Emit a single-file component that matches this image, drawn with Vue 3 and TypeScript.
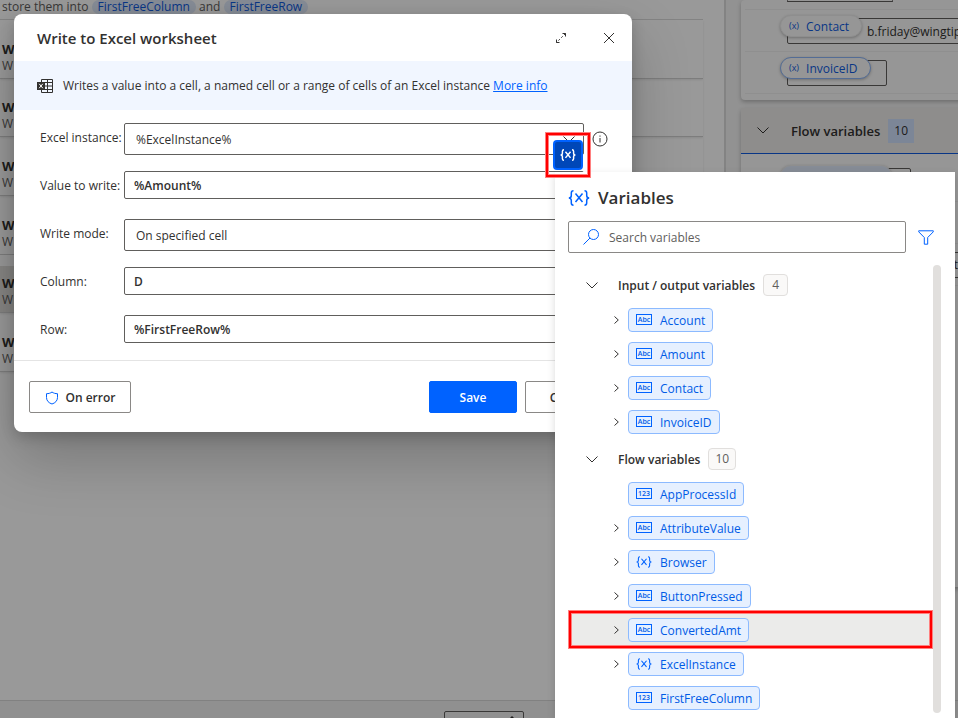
<script setup lang="ts">
import { ref } from 'vue'

type Kind = 'text' | 'number' | 'object'

interface Variable {
  name: string
  kind: Kind
  expandable: boolean
}

interface Group {
  title: string
  count: number
  items: Variable[]
}

const instance = ref('%ExcelInstance%')
const amount = ref('%Amount%')
const mode = ref('On specified cell')
const column = ref('D')
const row = ref('%FirstFreeRow%')
const search = ref('')
const selected = ref('ConvertedAmt')
const actionCount = 6
const currentAction = 5

const bracePath =
  'M5.5.8C3.5.8 3.3 2 3.3 3v2.500C3.300 7 2.500 8 .8 8c1.700 0 2.500 1 2.500 2.500V13c0 1 .2 2.200 2.200 2.200M16.500.8c2 0 2.200 1.200 2.200 2.200v2.500c0 1.500.8 2.500 2.500 2.500-1.700 0-2.500 1-2.500 2.500V13c0 1-.2 2.200-2.200 2.200M7.500 3.500l7 8.500M14.500 3.500l-7 8.500'

const groups: Group[] = [
  {
    title: 'Input / output variables',
    count: 4,
    items: [
      { name: 'Account', kind: 'text', expandable: true },
      { name: 'Amount', kind: 'text', expandable: true },
      { name: 'Contact', kind: 'text', expandable: true },
      { name: 'InvoiceID', kind: 'text', expandable: true },
    ],
  },
  {
    title: 'Flow variables',
    count: 10,
    items: [
      { name: 'AppProcessId', kind: 'number', expandable: false },
      { name: 'AttributeValue', kind: 'text', expandable: true },
      { name: 'Browser', kind: 'object', expandable: true },
      { name: 'ButtonPressed', kind: 'text', expandable: true },
      { name: 'ConvertedAmt', kind: 'text', expandable: true },
      { name: 'ExcelInstance', kind: 'object', expandable: true },
      { name: 'FirstFreeColumn', kind: 'number', expandable: false },
    ],
  },
]
</script>

<template>
  <div class="app">
    <div class="workspace">
      <main class="flow">
        <p class="flow-note">
          store them into <span class="token">FirstFreeColumn</span> and
          <span class="token">FirstFreeRow</span>
        </p>
        <ol class="actions">
          <li v-for="n in actionCount" :key="n" class="action" :class="{ current: n === currentAction }">
            <strong>W</strong>
            <span>W</span>
          </li>
        </ol>
      </main>

      <aside class="side">
        <section class="side-card io">
          <div class="io-row first"><span class="value-box"></span></div>
          <div class="io-row">
            <span class="pill"><i>(x)</i>Contact</span>
            <span class="value-box wide">b.friday@wingtip</span>
          </div>
          <div class="io-row">
            <span class="pill outlined"><i>(x)</i>InvoiceID</span>
            <span class="value-box"></span>
          </div>
        </section>
        <section class="side-card flow-vars">
          <header class="side-head">
            <svg width="12" height="7" viewBox="0 0 12 7"><path d="M.5.5 6 6 11.5.5" /></svg>
            <h2>Flow variables</h2>
            <span class="side-count">10</span>
          </header>
          <div class="io-row">
            <span class="pill tinted"></span>
            <span class="value-box mid"></span>
          </div>
          <div class="io-row"></div>
          <div class="io-row">
            <span class="value-box tail">t</span>
          </div>
        </section>
      </aside>
    </div>
    <footer class="status"><span class="spinner"><i></i></span></footer>
  </div>

  <div class="scrim"></div>

  <section class="dialog" role="dialog" aria-labelledby="dialog-title">
    <header class="dialog-head">
      <h1 id="dialog-title">Write to Excel worksheet</h1>
      <button type="button" class="plain expand" aria-label="Expand">
        <svg width="12" height="12" viewBox="0 0 12 12">
          <path d="M7.500 1.500h3v3M4.500 10.500h-3v-3" />
          <path d="M10.500 1.500 1.500 10.500" stroke-dasharray="2 2" />
        </svg>
      </button>
      <button type="button" class="plain" aria-label="Close">
        <svg width="12" height="12" viewBox="0 0 12 12"><path d="M1 1l10 10M11 1 1 11" /></svg>
      </button>
    </header>

    <div class="summary">
      <svg width="16" height="16" viewBox="0 0 16 16">
        <path d="M4.500 1.500h11v13h-11zM4.500 4.500h11M4.500 8h11M4.500 11.500h11M10.500 1.500v13" class="grid-lines" />
        <path d="M0 4h8v8H0z" class="tile" />
        <path d="M2.200 5.800l3.600 4.400M5.800 5.800l-3.600 4.400" class="tile-x" />
      </svg>
      <p>
        Writes a value into a cell, a named cell or a range of cells of an Excel instance
        <a href="#">More info</a>
      </p>
    </div>

    <form class="form" @submit.prevent>
      <label for="f-instance">Excel instance:</label>
      <div class="field">
        <select id="f-instance" v-model="instance">
          <option>%ExcelInstance%</option>
        </select>
        <svg class="caret" width="12" height="7" viewBox="0 0 12 7"><path d="M.5.5 6 6 11.500.5" /></svg>
      </div>
      <button type="button" class="plain info" aria-label="Information">
        <svg width="16" height="16" viewBox="0 0 16 16">
          <circle cx="8" cy="8" r="7" />
          <path d="M8 7v4.500M8 4.500v1.200" />
        </svg>
      </button>

      <label for="f-amount">Value to write:</label>
      <div class="field">
        <input id="f-amount" v-model="amount" type="text" />
        <span class="picker">
          <button type="button" aria-label="Select variable">
            <svg width="16" height="12" viewBox="0 0 22 16"><path :d="bracePath" /></svg>
          </button>
        </span>
      </div>

      <label for="f-mode">Write mode:</label>
      <div class="field">
        <select id="f-mode" v-model="mode">
          <option>On specified cell</option>
        </select>
      </div>

      <label for="f-column">Column:</label>
      <div class="field"><input id="f-column" v-model="column" type="text" /></div>

      <label for="f-row">Row:</label>
      <div class="field"><input id="f-row" v-model="row" type="text" /></div>
    </form>

    <footer class="dialog-foot">
      <button type="button" class="btn on-error">
        <svg width="14" height="14" viewBox="0 0 14 14">
          <path d="M7 1C5.500 2.200 3.500 2.700 1.500 2.700V6.500C1.500 9.800 3.800 12 7 13c3.200-1 5.500-3.200 5.500-6.500V2.700C10.500 2.700 8.500 2.200 7 1z" />
        </svg>
        On error
      </button>
      <button type="button" class="btn primary">Save</button>
      <button type="button" class="btn">Cancel</button>
    </footer>
  </section>

  <section class="variables" aria-labelledby="variables-title">
    <header class="variables-head">
      <svg class="brace" width="22" height="16" viewBox="0 0 22 16"><path :d="bracePath" /></svg>
      <h2 id="variables-title">Variables</h2>
    </header>

    <div class="search-row">
      <label class="search">
        <svg width="16" height="16" viewBox="0 0 16 16">
          <circle cx="10.500" cy="5.500" r="5" /><path d="M7 9 .5 15.500" />
        </svg>
        <input v-model="search" type="text" placeholder="Search variables" aria-label="Search variables" />
      </label>
      <button type="button" class="plain filter" aria-label="Filter">
        <svg width="16" height="15" viewBox="0 0 16 15">
          <path d="M.7.8h14.600v1L9.700 7.500v6.700H6.300V7.500L.7 1.800z" />
        </svg>
      </button>
    </div>

    <div class="scroller">
      <div class="groups">
        <section v-for="group in groups" :key="group.title">
          <header class="group-head">
            <svg width="12" height="7" viewBox="0 0 12 7"><path d="M.5.5 6 6 11.500.5" /></svg>
            <h3>{{ group.title }}</h3>
            <span class="count">{{ group.count }}</span>
          </header>
          <ul>
            <li
              v-for="item in group.items"
              :key="item.name"
              class="item"
              :class="{ active: item.name === selected }"
            >
              <span class="expander">
                <svg v-if="item.expandable" width="5" height="8" viewBox="0 0 5 8"><path d="M.5.5 4.300 4 .5 7.500" /></svg>
              </span>
              <button type="button" class="chip" @click="selected = item.name">
                <svg v-if="item.kind === 'object'" class="brace" width="16" height="12" viewBox="0 0 22 16">
                  <path :d="bracePath" />
                </svg>
                <span v-else class="kind">{{ item.kind === 'text' ? 'Abc' : '123' }}</span>
                <span class="chip-name">{{ item.name }}</span>
              </button>
            </li>
          </ul>
        </section>
      </div>
      <div class="rail"></div>
    </div>
  </section>
</template>

<style>
html,
body {
  height: 100%;
  overflow: hidden;
}

#app {
  height: 100%;
  position: relative;
  font: 12px/16px "Open Sans", "Noto Sans", sans-serif;
  color: #323130;
}
</style>

<style scoped>
* {
  box-sizing: border-box;
}

h1,
h2,
h3,
p,
ul,
ol {
  margin: 0;
  padding: 0;
  list-style: none;
}

button,
input,
select {
  font: inherit;
  color: inherit;
}

svg {
  display: block;
  flex: none;
  fill: none;
  stroke: currentColor;
}

.plain {
  display: flex;
  padding: 0;
  border: 0;
  background: none;
}

/* Designer behind the dialog */
.app {
  display: flex;
  flex-direction: column;
  height: 100%;
  background: #fff;
}

.workspace {
  display: flex;
  flex: 1;
  min-height: 0;
}

.flow {
  flex: 1;
  min-width: 0;
  padding-right: 21px;
}

.flow-note {
  height: 20px;
  padding-left: 2px;
  line-height: 14px;
  color: #605e5c;
  border-bottom: 1px solid #dcdcdc;
  white-space: nowrap;
}

.token {
  display: inline-block;
  padding: 0 6px;
  border-radius: 8px;
  background: #dfe9fa;
  color: #0f5be0;
}

.actions {
  display: grid;
  grid-auto-rows: 1fr;
  min-height: 352px;
}

.action {
  display: flex;
  flex-direction: column;
  justify-content: flex-end;
  gap: 1px;
  padding: 0 2px 4px;
  color: #605e5c;
  border-bottom: 1px solid #d2d2d2;
  box-shadow: 0 1px 2px rgba(0, 0, 0, 0.1);
}

.action strong {
  font-size: 13px;
  font-weight: 700;
  color: #323130;
}

.action.current {
  background: linear-gradient(#fff 11px, #e1dfdd 11px);
}

.side {
  width: 234px;
  padding-left: 15px;
  background: #f3f3f3;
  border-left: 2px solid #dadada;
  overflow: hidden;
}

.side-card {
  width: 300px;
  background: #fafafa;
  border-radius: 4px;
  box-shadow: 0 2px 4px rgba(0, 0, 0, 0.25);
}

.io {
  padding-bottom: 6px;
}

.io-row {
  position: relative;
  display: flex;
  height: 42px;
  margin-left: 4px;
  padding: 8px 0 8px 42px;
  border-bottom: 1px solid #efefef;
}

.io-row.first {
  height: 10px;
  padding-top: 0;
}

.io-row.first .value-box {
  height: 2px;
  width: 106px;
  border-top: 0;
}

.value-box {
  border: 1px solid #605e5c;
  border-radius: 2px;
  width: 100px;
  height: 26px;
}

.value-box.wide {
  width: 220px;
  padding-left: 79px;
  line-height: 26px;
}

.value-box.mid {
  width: 124px;
}

.value-box.tail {
  width: 220px;
  padding-right: 48px;
  line-height: 24px;
  text-align: right;
}

.pill {
  position: absolute;
  left: 35px;
  top: 5px;
  display: flex;
  gap: 7px;
  height: 22px;
  padding: 0 12px 0 8px;
  line-height: 21px;
  border: 1px solid #ededed;
  border-radius: 11px;
  background: #fafafa;
  color: #0f5be0;
  box-shadow: 0 1px 3px rgba(0, 0, 0, 0.25);
}

.pill i {
  font-size: 9px;
  font-style: normal;
  line-height: 19px;
}

.pill.outlined {
  border-color: #8ab4f8;
}

.pill.tinted {
  width: 112px;
  background: #dfe9fa;
}

.flow-vars {
  margin-top: 8px;
  min-height: 479px;
}

.side-head {
  display: flex;
  align-items: center;
  height: 46px;
  margin-bottom: 6px;
  padding-left: 16px;
  background: #edebe9;
  border-bottom: 1px solid #0f5be0;
}

.side-head h2 {
  margin-left: 22px;
  font-size: 13px;
  font-weight: 600;
}

.side-count {
  margin-left: 8px;
  padding: 0 6px;
  line-height: 24px;
  background: #cfe0fc;
}

.status {
  display: flex;
  justify-content: center;
  height: 18px;
  padding: 10px 0 0 10px;
  overflow: hidden;
  background: #f0f0f0;
  border-top: 1px solid #d8d8d8;
}

.spinner {
  display: flex;
  justify-content: flex-end;
  width: 80px;
  height: 28px;
  padding: 4px 8px;
  border: 1px solid #605e5c;
  border-radius: 2px;
}

.spinner i {
  height: 0;
  border: 3px solid transparent;
  border-top: 0;
  border-bottom: 3px solid #323130;
}

.scrim {
  position: absolute;
  inset: 0;
  background: rgba(0, 0, 0, 0.4);
}

/* Dialog */
.dialog {
  position: absolute;
  top: 14px;
  left: 14px;
  width: 618px;
  background: #fff;
  border-radius: 8px;
  box-shadow: 0 26px 58px rgba(0, 0, 0, 0.22), 0 5px 14px rgba(0, 0, 0, 0.18);
}

.dialog-head {
  display: flex;
  align-items: center;
  gap: 36px;
  height: 47px;
  padding: 0 17px 0 23px;
}

.dialog-head h1 {
  flex: 1;
  font-size: 15px;
  font-weight: 600;
  line-height: 24px;
}

.summary {
  display: flex;
  align-items: center;
  gap: 10px;
  height: 49px;
  padding: 0 23px;
  background: #f1f6ff;
}

.grid-lines {
  stroke: #323130;
}

.tile {
  fill: #323130;
  stroke: none;
}

.tile-x {
  stroke: #fff;
}

.summary a {
  color: #0062ff;
}

.form {
  display: grid;
  grid-template-columns: 84px 1fr 32px;
  grid-auto-rows: 32px;
  row-gap: 16px;
  padding: 13px 16px 13px 26px;
}

.form label {
  grid-column: 1;
  line-height: 30px;
  white-space: nowrap;
}

.field {
  position: relative;
  grid-column: 2;
}

.field select,
.field input {
  display: block;
  width: 100%;
  height: 32px;
  padding: 2px 11px 0;
  appearance: none;
  border: 1px solid #605e5c;
  border-radius: 2px;
  background: #fff;
  outline: 0;
}

.field input {
  height: 28px;
  padding: 0 9px;
  font-weight: 600;
}

.caret {
  position: absolute;
  right: 9px;
  top: 13px;
}

.info {
  align-self: start;
  padding: 8px;
}

.picker {
  position: absolute;
  z-index: 3;
  right: -6px;
  bottom: calc(100% - 6px);
  padding: 5px;
  border: 2px solid #f00;
  box-shadow: 0 0 0 1px #ff8080, inset 0 0 0 1px #ff8080;
}

.picker button {
  display: grid;
  place-items: center;
  width: 30px;
  height: 30px;
  padding: 0;
  border: 2px solid #0062ff;
  border-radius: 4px;
  background: #0047b8;
  color: #fff;
  stroke-width: 2;
}

.dialog-foot {
  display: flex;
  gap: 8px;
  padding: 20px 19px 19px 15px;
  border-top: 1px solid #e4e4e4;
}

.btn {
  display: flex;
  align-items: center;
  justify-content: center;
  width: 88px;
  height: 32px;
  padding: 2px 0 0;
  border: 1px solid #8a8886;
  border-radius: 2px;
  background: #fff;
  font-weight: 600;
}

.btn.on-error {
  gap: 7px;
  width: 102px;
  margin-right: auto;
}

.btn.on-error svg {
  color: #0062ff;
}

.btn.primary {
  border-color: #0062ff;
  background: #0062ff;
  color: #fff;
}

/* Variable picker */
.variables {
  position: absolute;
  z-index: 2;
  top: 172px;
  right: 3px;
  bottom: 0;
  display: flex;
  flex-direction: column;
  width: 400px;
  padding: 0 14px 5px 13px;
  background: #fff;
  box-shadow: 0 3px 8px rgba(0, 0, 0, 0.15);
}

.variables-head {
  display: flex;
  align-items: center;
  gap: 8px;
  height: 49px;
  padding-top: 2px;
}

.variables-head h2 {
  font-size: 17px;
  font-weight: 600;
  line-height: 24px;
}

.brace {
  color: #0062ff;
  stroke-width: 1.5;
}

.search-row {
  display: flex;
  gap: 12px;
  padding-right: 7px;
}

.search {
  display: flex;
  flex: 1;
  align-items: center;
  gap: 10px;
  height: 32px;
  padding: 0 14px;
  border: 1px solid #8a8886;
  border-radius: 2px;
}

.search svg,
.filter {
  color: #0062ff;
}

.search input {
  flex: 1;
  min-width: 0;
  padding: 2px 0 0;
  border: 0;
  outline: 0;
  background: none;
}

.search input::placeholder {
  color: #605e5c;
  opacity: 1;
}

.filter {
  align-items: center;
}

.scroller {
  display: flex;
  flex: 1;
  min-height: 0;
  margin-top: 12px;
}

.groups {
  flex: 1;
  overflow: hidden;
}

.rail {
  width: 8px;
  border-radius: 4px;
  background: #e1dfdd;
}

.group-head {
  display: flex;
  align-items: center;
  height: 38px;
  padding: 2px 0 0 18px;
}

.group-head h3 {
  margin-left: 20px;
  padding-top: 2px;
  font-size: 12px;
  font-weight: 600;
}

.count {
  min-width: 25px;
  margin-left: 8px;
  padding: 0 6px;
  border: 1px solid #e1dfdd;
  border-radius: 4px;
  background: #faf9f8;
  color: #605e5c;
  line-height: 20px;
  text-align: center;
}

.item {
  position: relative;
  display: flex;
  align-items: center;
  height: 34px;
}

.expander {
  width: 60px;
  padding-left: 46px;
}

.chip {
  display: flex;
  align-items: center;
  gap: 8px;
  height: 24px;
  padding: 0 7px;
  border: 1px solid #8cbaff;
  border-radius: 4px;
  background: #e6f0ff;
  color: #005be6;
  white-space: nowrap;
}

.chip-name {
  padding-top: 2px;
}

.kind {
  width: 16px;
  height: 11px;
  margin-bottom: 1px;
  border: 1px solid #0062ff;
  font-size: 7px;
  font-weight: 600;
  line-height: 9px;
  text-align: center;
}

.item.active {
  background: #ebebea;
}

.item.active::after {
  content: "";
  position: absolute;
  inset: -2px 1px -1px;
  border: 2px solid #f00;
  box-shadow: 0 0 0 1px #ff8080, inset 0 0 0 1px #ff8080;
  pointer-events: none;
}
</style>
